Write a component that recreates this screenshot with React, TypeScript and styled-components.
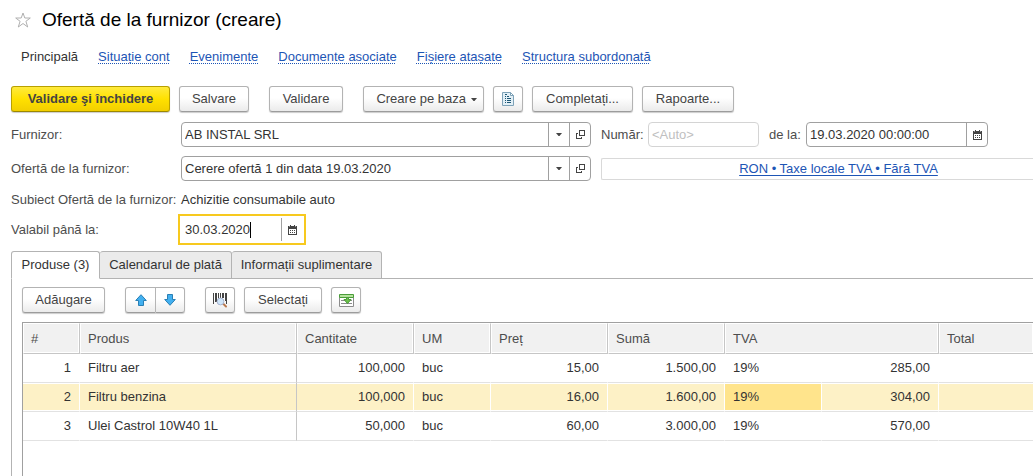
import React from "react";
import styled, { createGlobalStyle, css } from "styled-components";

const GlobalStyle = createGlobalStyle`
  *, *::before, *::after { box-sizing: border-box; }
  body {
    margin: 0;
    background: #fff;
    color: #333;
    font: 13px/16px "Liberation Sans", Arial, sans-serif;
  }
  button, input { font: inherit; color: inherit; margin: 0; }
  svg { display: block; flex: none; }
`;

const Page = styled.div`
  display: flex;
  flex-direction: column;
  min-height: 100vh;
  padding-left: 11px;
  overflow: hidden;
`;

const TitleBar = styled.header`
  display: flex;
  align-items: center;
  gap: 11px;
  height: 40px;
  padding-left: 4px;
`;

const StarButton = styled.button`
  padding: 0;
  border: 0;
  background: none;
`;

const Title = styled.h1`
  margin: 0;
  font-size: 19px;
  line-height: 24px;
  font-weight: 400;
  color: #000;
`;

const Nav = styled.nav`
  display: flex;
  align-items: center;
  gap: 20px;
  height: 34px;
  padding-left: 10px;
`;

const NavLink = styled.a`
  color: #1d55b5;
  text-decoration: underline dotted 1px;
  text-underline-offset: 2px;
  text-decoration-skip-ink: none;
`;

const Toolbar = styled.div<{ $top: number }>`
  display: flex;
  align-items: center;
  gap: 9px;
  padding-top: ${(p) => p.$top}px;
`;

const Button = styled.button<{
  $width: number;
  $primary?: boolean;
  $apart?: boolean;
  $menu?: boolean;
}>`
  display: flex;
  align-items: center;
  justify-content: ${(p) => (p.$menu ? "flex-end" : "center")};
  gap: 5px;
  flex: none;
  width: ${(p) => p.$width}px;
  height: 26px;
  padding: 0 ${(p) => (p.$menu ? 6 : 0)}px;
  margin-left: ${(p) => (p.$apart ? 11 : 0)}px;
  border: 1px solid #b3b3b3;
  border-bottom-color: #9c9c9c;
  border-radius: 3px;
  background: linear-gradient(#fff 45%, #ebebeb);
  box-shadow: 0 1px 1px #ccc;
  color: #444;
  white-space: nowrap;
  ${(p) =>
    p.$primary &&
    css`
      border-color: #b8a000;
      border-bottom-color: #9c8800;
      background: linear-gradient(#ffea3d, #ffe100 50%, #f2cf00);
      font-weight: 700;
    `}
`;

const ButtonPair = styled.div`
  display: flex;
  margin-left: 11px;
  & > button:first-child { border-radius: 3px 0 0 3px; }
  & > button:last-child { border-radius: 0 3px 3px 0; border-left: 0; }
`;

const Form = styled.form`
  padding-top: 10px;
`;

const FormRow = styled.div<{ $height: number }>`
  display: flex;
  align-items: center;
  height: ${(p) => p.$height}px;
`;

const Label = styled.label<{ $width: number }>`
  flex: none;
  width: ${(p) => p.$width}px;
  color: #4d4d4d;
  white-space: nowrap;
`;

const Field = styled.div<{ $width: number; $muted?: boolean }>`
  display: flex;
  flex: 0 1 ${(p) => p.$width}px;
  min-width: 0;
  height: 25px;
  margin-right: 10px;
  border: 1px solid ${(p) => (p.$muted ? "#d4d4d4" : "#a0a0a0")};
  border-radius: 4px;
  background: #fff;
`;

const TextInput = styled.input`
  flex: 1;
  min-width: 0;
  padding: 0 3px;
  border: 0;
  outline: 0;
  background: none;
  &::placeholder { color: #c0c0c0; opacity: 1; }
`;

const FieldButton = styled.button`
  display: flex;
  align-items: center;
  justify-content: center;
  align-self: stretch;
  flex: none;
  width: 21px;
  padding: 0;
  border: 0;
  border-left: 1px solid #a0a0a0;
  background: none;
`;

const TaxBox = styled.div`
  flex: 1;
  height: 22px;
  padding-left: 42px;
  border: 1px solid #d9d9d9;
  border-right: 0;
  border-radius: 2px 0 0 2px;
  line-height: 20px;
  text-align: center;
  a {
    color: #1d55b5;
    text-underline-offset: 2px;
    text-decoration-skip-ink: none;
  }
`;

const FocusField = styled.div`
  display: flex;
  align-items: center;
  width: 128px;
  height: 31px;
  margin-left: -3px;
  padding: 2px 2px 2px 5px;
  border: 2px solid #f7c91e;
`;

const DateInput = styled.input`
  width: 65px;
  padding: 0;
  border: 0;
  outline: 0;
  background: none;
`;

const Caret = styled.span`
  width: 1px;
  height: 16px;
  margin-right: auto;
  background: #000;
`;

const Tabs = styled.div`
  display: flex;
  margin-top: 1px;
`;

const Tab = styled.button<{ $width: number; $active?: boolean }>`
  flex: none;
  width: ${(p) => p.$width}px;
  height: 28px;
  padding: 0;
  border: 1px solid #b3b3b3;
  border-left-width: ${(p) => (p.$active ? 1 : 0)}px;
  border-bottom-color: ${(p) => (p.$active ? "#fff" : "#b3b3b3")};
  border-radius: 3px 3px 0 0;
  background: ${(p) => (p.$active ? "#fff" : "#ebebeb")};
  white-space: nowrap;
`;

const TabsRest = styled.div`
  flex: 1;
  border-bottom: 1px solid #b3b3b3;
`;

const Panel = styled.section`
  flex: 1;
  display: flex;
  flex-direction: column;
  padding-left: 10px;
  border-left: 1px solid #b3b3b3;
`;

const TableFrame = styled.div`
  flex: 1;
  margin-top: 9px;
  border: solid #a0a0a0;
  border-width: 1px 0 0 1px;
`;

const Table = styled.table`
  width: 100%;
  table-layout: fixed;
  border-collapse: separate;
  border-spacing: 0;
`;

const HeadCell = styled.th`
  height: 31px;
  padding: 0 7px;
  border: 1px solid #fff;
  border-right-color: #c6c6c6;
  border-bottom-color: #c6c6c6;
  background: #f1f1f1;
  box-shadow: inset -1px -1px #fff;
  color: #4d4d4d;
  font-weight: 400;
  text-align: left;
  &:last-child { border-right: 0; }
`;

const Cell = styled.td<{ $right?: boolean; $divider?: boolean; $fill?: string }>`
  height: 29px;
  padding: 0 8px;
  border-right: 1px solid ${(p) => (p.$divider ? "#c6c6c6" : "#fff")};
  border-bottom: 1px solid #e2e2e2;
  background: ${(p) => p.$fill || "#fff"};
  box-shadow: inset 0 1px #fff, inset 0 -1px #fff;
  text-align: ${(p) => (p.$right ? "right" : "left")};
  &:last-child { border-right: 0; }
`;

const StarIcon = () => (
  <svg width="16" height="16" viewBox="0 0 16 16" fill="#fff" stroke="#b0b0b0">
    <path d="M8 1 L9.8 6 H15.3 L10.9 9.3 L12.7 15 L8 11.5 L3.3 15 L5.1 9.3 L.7 6 H6.2 Z" />
  </svg>
);

const CaretDown = () => (
  <svg width="6" height="3" viewBox="0 0 6 3" fill="#444">
    <path d="M0 0H6L3.5 3H2.5Z" />
  </svg>
);

const OpenIcon = () => (
  <svg width="9" height="9" viewBox="0 0 9 9" fill="#444" shapeRendering="crispEdges">
    <path d="M3 0H9V6H3ZM4 1V5H8V1Z" fillRule="evenodd" />
    <path d="M0 3H2V4H1V8H5V7H6V9H0Z" />
  </svg>
);

const CalendarIcon = () => (
  <svg width="9" height="10" viewBox="0 0 9 10" fill="#444" shapeRendering="crispEdges">
    <path d="M0 1H9V10H0ZM1 4V9H8V4Z" fillRule="evenodd" />
    <path d="M2 0H3V2H2ZM6 0H7V2H6ZM2 5H3V6H2ZM4 5H5V6H4ZM6 5H7V6H6ZM2 7H3V8H2ZM4 7H5V8H4ZM6 7H7V8H6Z" />
    <path d="M1 1H2V2H1ZM7 1H8V2H7Z" fill="#999" />
  </svg>
);

const DocumentIcon = () => (
  <svg width="12" height="14" viewBox="0 0 12 14">
    <path d="M.5 .5H8.5L11.5 3.5V13.5H.5Z" fill="#e3f0f7" stroke="#7fa3b8" />
    <path d="M8.5 .5V3.5H11.5Z" fill="#fff" stroke="#7fa3b8" />
    <path
      d="M3 2.5H5M3 4.5H4M5 4.5H7M3 6.5H4M5 6.5H9M3 8.5H4M5 8.5H9M3 10.5H4M5 10.5H9"
      stroke="#1f5876"
    />
  </svg>
);

const ArrowIcon = ({ down }: { down?: boolean }) => (
  <svg width="12" height="12" viewBox="0 0 12 12">
    <path
      d={down ? "M3.5 .5H8.5V5.5H11.3L6 11.3L.7 5.5H3.5Z" : "M3.5 11.5H8.5V6.5H11.3L6 .7L.7 6.5H3.5Z"}
      fill="#42b0f0"
      stroke="#2a7fb4"
    />
  </svg>
);

const BarcodeIcon = () => (
  <svg width="16" height="16" viewBox="0 0 16 16">
    <path
      d="M1 1H2V12H1ZM3 1H5V10H3ZM6 1H7V7H6ZM8 1H9V6H8ZM10 1H12V6H10ZM13 1H14V9H13ZM14 1H15V12H14Z"
      fill="#444"
      shapeRendering="crispEdges"
    />
    <path d="M11 11.5L14 14.5" stroke="#b9794f" strokeWidth="2" strokeLinecap="round" />
    <circle cx="8.5" cy="9.5" r="3.4" fill="#cfe6fa" stroke="#a9b4cf" />
  </svg>
);

const FillTableIcon = () => (
  <svg width="15" height="13" viewBox="0 0 15 13">
    <path d="M.5 3.5H14.5V12.5H.5Z" fill="#fff" stroke="#8c8c8c" />
    <path d="M2 6.5H13M2 9.5H13" stroke="#8c8c8c" />
    <path d="M.5 .5H14.5V3.5H.5Z" fill="#b4e39c" stroke="#4a9c3a" />
    <path d="M7.5 3.5H9.5V5.5H12L8.5 9.5L5 5.5H7.5Z" fill="#6cc04a" stroke="#4a9c3a" />
  </svg>
);

const links = [
  "Situație cont",
  "Evenimente",
  "Documente asociate",
  "Fișiere atașate",
  "Structura subordonată",
];

const widths = [57, 217, 117, 77, 117, 117, 97, 117];

const rows = [
  ["1", "Filtru aer", "100,000", "buc", "15,00", "1.500,00", "19%", "285,00", ""],
  ["2", "Filtru benzina", "100,000", "buc", "16,00", "1.600,00", "19%", "304,00", ""],
  ["3", "Ulei Castrol 10W40 1L", "50,000", "buc", "60,00", "3.000,00", "19%", "570,00", ""],
];

const rightAligned = [0, 2, 4, 5, 7];
const selectedRow = 1;
const selectedColumn = 6;

const cellFill = (row: number, column: number) => {
  if (row !== selectedRow) return undefined;
  return column === selectedColumn ? "#ffe48c" : "#fdf1c6";
};

const LookupField = ({ id, value }: { id: string; value: string }) => (
  <Field $width={410}>
    <TextInput id={id} defaultValue={value} />
    <FieldButton type="button" aria-label="Alegere">
      <CaretDown />
    </FieldButton>
    <FieldButton type="button" aria-label="Deschidere">
      <OpenIcon />
    </FieldButton>
  </Field>
);

export default function App() {
  return (
    <Page>
      <GlobalStyle />
      <TitleBar>
        <StarButton aria-label="Favorite">
          <StarIcon />
        </StarButton>
        <Title>Ofertă de la furnizor (creare)</Title>
      </TitleBar>

      <Nav>
        <span>Principală</span>
        {links.map((text) => (
          <NavLink key={text} href="#">
            {text}
          </NavLink>
        ))}
      </Nav>

      <Toolbar $top={12}>
        <Button $width={159} $primary>Validare şi închidere</Button>
        <Button $width={70}>Salvare</Button>
        <Button $width={74} $apart>Validare</Button>
        <Button $width={121} $apart $menu>
          Creare pe baza <CaretDown />
        </Button>
        <Button $width={30} aria-label="Document">
          <DocumentIcon />
        </Button>
        <Button $width={101}>Completați...</Button>
        <Button $width={92}>Rapoarte...</Button>
      </Toolbar>

      <Form>
        <FormRow $height={25}>
          <Label $width={170} htmlFor="supplier">Furnizor:</Label>
          <LookupField id="supplier" value="AB INSTAL SRL" />
          <Label $width={47} htmlFor="number">Număr:</Label>
          <Field $width={111} $muted>
            <TextInput id="number" placeholder="<Auto>" />
          </Field>
          <Label $width={37} htmlFor="date">de la:</Label>
          <Field $width={182}>
            <TextInput id="date" defaultValue="19.03.2020 00:00:00" />
            <FieldButton type="button" aria-label="Calendar">
              <CalendarIcon />
            </FieldButton>
          </Field>
        </FormRow>
        <FormRow $height={43}>
          <Label $width={170} htmlFor="offer">Ofertă de la furnizor:</Label>
          <LookupField id="offer" value="Cerere ofertă 1 din data 19.03.2020" />
          <TaxBox>
            <a href="#">RON • Taxe locale TVA • Fără TVA</a>
          </TaxBox>
        </FormRow>
        <FormRow $height={19}>
          <Label as="span" $width={170}>Subiect Ofertă de la furnizor:</Label>
          <span>Achizitie consumabile auto</span>
        </FormRow>
        <FormRow $height={41}>
          <Label $width={170} htmlFor="valid">Valabil până la:</Label>
          <FocusField>
            <DateInput id="valid" defaultValue="30.03.2020" />
            <Caret />
            <FieldButton type="button" aria-label="Calendar">
              <CalendarIcon />
            </FieldButton>
          </FocusField>
        </FormRow>
      </Form>

      <Tabs role="tablist">
        <Tab role="tab" aria-selected $width={89} $active>Produse (3)</Tab>
        <Tab role="tab" $width={132}>Calendarul de plată</Tab>
        <Tab role="tab" $width={150}>Informații suplimentare</Tab>
        <TabsRest />
      </Tabs>

      <Panel>
        <Toolbar $top={8}>
          <Button $width={83}>Adăugare</Button>
          <ButtonPair>
            <Button $width={31} aria-label="Sus">
              <ArrowIcon />
            </Button>
            <Button $width={29} aria-label="Jos">
              <ArrowIcon down />
            </Button>
          </ButtonPair>
          <Button $width={30} $apart aria-label="Cod de bare">
            <BarcodeIcon />
          </Button>
          <Button $width={78}>Selectați</Button>
          <Button $width={30} aria-label="Completare tabel">
            <FillTableIcon />
          </Button>
        </Toolbar>

        <TableFrame>
          <Table>
            <colgroup>
              {widths.map((width, i) => (
                <col key={i} width={width} />
              ))}
              <col />
            </colgroup>
            <thead>
              <tr>
                <HeadCell>#</HeadCell>
                <HeadCell>Produs</HeadCell>
                <HeadCell>Cantitate</HeadCell>
                <HeadCell>UM</HeadCell>
                <HeadCell>Preț</HeadCell>
                <HeadCell>Sumă</HeadCell>
                <HeadCell colSpan={2}>TVA</HeadCell>
                <HeadCell>Total</HeadCell>
              </tr>
            </thead>
            <tbody>
              {rows.map((row, r) => (
                <tr key={r}>
                  {row.map((text, c) => (
                    <Cell
                      key={c}
                      $right={rightAligned.includes(c)}
                      $divider={c === 1}
                      $fill={cellFill(r, c)}
                    >
                      {text}
                    </Cell>
                  ))}
                </tr>
              ))}
            </tbody>
          </Table>
        </TableFrame>
      </Panel>
    </Page>
  );
}
